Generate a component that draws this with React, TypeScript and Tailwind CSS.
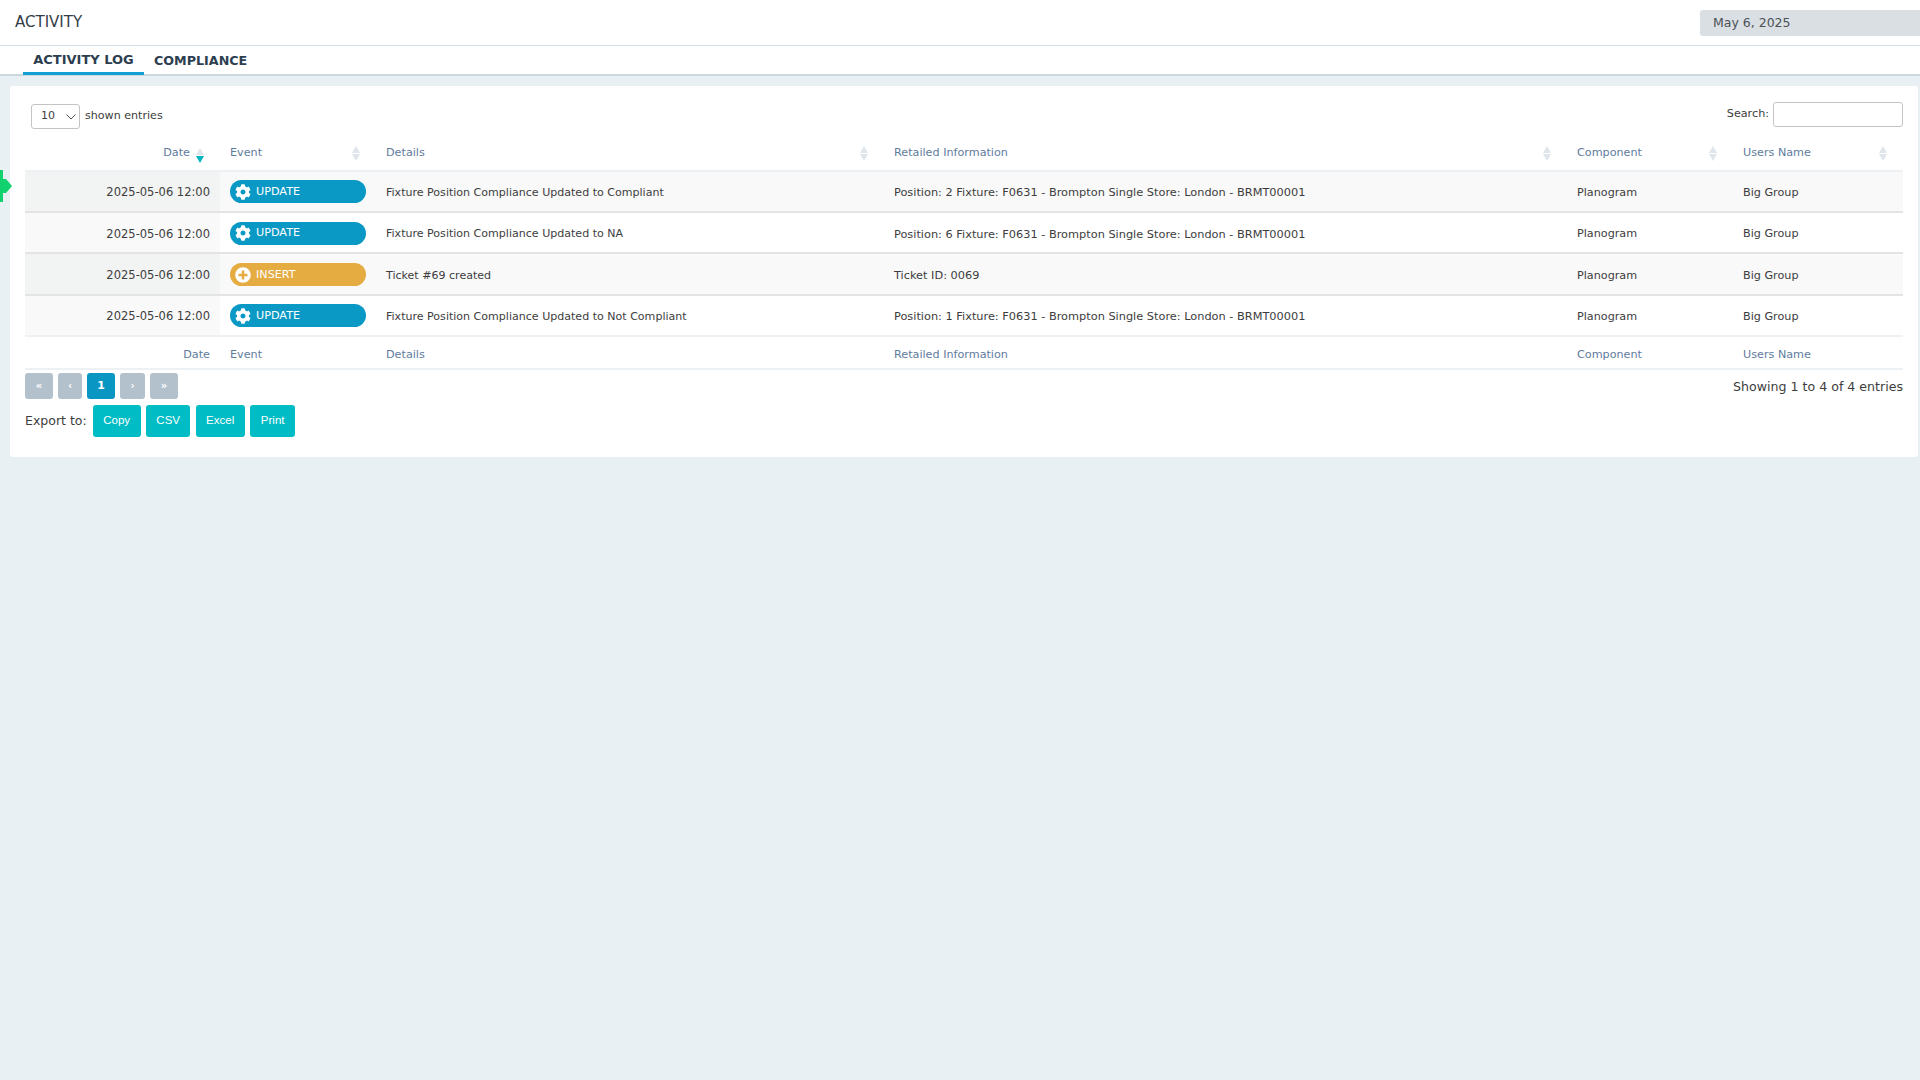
import { FaCog, FaPlusCircle } from "react-icons/fa";

const rows = [
  {
    event: "UPDATE",
    details: "Fixture Position Compliance Updated to Compliant",
    info: "Position: 2 Fixture: F0631 - Brompton Single Store: London - BRMT00001",
  },
  {
    event: "UPDATE",
    details: "Fixture Position Compliance Updated to NA",
    info: "Position: 6 Fixture: F0631 - Brompton Single Store: London - BRMT00001",
  },
  {
    event: "INSERT",
    details: "Ticket #69 created",
    info: "Ticket ID: 0069",
  },
  {
    event: "UPDATE",
    details: "Fixture Position Compliance Updated to Not Compliant",
    info: "Position: 1 Fixture: F0631 - Brompton Single Store: London - BRMT00001",
  },
];

function SortIcon({ active }: { active?: boolean }) {
  return (
    <span className="ml-auto mr-[16px] flex w-[8px] flex-col items-center gap-[1px]">
      <span className="h-0 w-0 border-x-[4px] border-b-[7px] border-x-transparent border-b-[#dfe5ea]" />
      <span
        className={`h-0 w-0 border-x-[4px] border-t-[7px] border-x-transparent ${
          active ? "border-t-[#00b5bd]" : "border-t-[#dfe5ea]"
        }`}
      />
    </span>
  );
}

function EventBadge({ event }: { event: string }) {
  const isInsert = event === "INSERT";
  return (
    <div
      className={`flex h-[23px] w-[136px] items-center rounded-full pl-[5px] text-[11.2px] text-white ${
        isInsert ? "bg-[#e5ac42]" : "bg-[#0a98c4]"
      }`}
    >
      {isInsert ? <FaPlusCircle className="h-[16px] w-[16px]" /> : <FaCog className="h-[16px] w-[16px]" />}
      <span className="ml-[5px] pt-[1px]">{event}</span>
    </div>
  );
}

const headers = ["Event", "Details", "Retailed Information", "Component", "Users Name"];

export default function App() {
  return (
    <div className="relative min-h-[1080px] bg-[#e8f0f3] font-['DejaVu_Sans',sans-serif] text-[11.2px] text-[#3d3d3d]">
      {/* Header */}
      <div className="flex h-[46px] items-center justify-between border-b border-[#d3dde5] bg-white">
        <div className="pl-[15px] text-[15px] text-[#333d47]">ACTIVITY</div>
        <div className="flex h-[26px] w-[220px] items-center rounded-l-[3px] bg-[#dadfe3] pl-[13px] pt-[1px] text-[12.5px] text-[#4b5258]">
          May 6, 2025
        </div>
      </div>

      {/* Tabs */}
      <div className="flex h-[30px] border-b-2 border-[#ccd6de] bg-white pl-[23px] font-bold text-[#2c3e50]">
        <div className="flex h-[29px] w-[121px] items-center justify-center border-b-[3px] border-[#12a0d2] pt-[2px] text-[13px]">
          ACTIVITY LOG
        </div>
        <div className="flex h-[28px] items-center pl-[10px] pt-[2px] text-[12.7px]">COMPLIANCE</div>
      </div>

      {/* Row marker */}
      <svg viewBox="0 0 12 32" className="absolute left-0 top-[170px] h-[32px] w-[12px]">
        <path d="M0 0h3v9l3 0 6 7-6 7-3 0v9H0z" fill="#12d26f" />
      </svg>

      {/* Card */}
      <div className="ml-[10px] mr-[2px] mt-[10px] h-[371px] rounded-[3px] bg-white px-[15px]">
        <div className="flex h-[59px] items-start justify-between">
          <div className="ml-[6px] mt-[18px] flex items-center">
            <div className="flex h-[25px] w-[49px] items-center justify-between rounded-[3px] border-[1.5px] border-[#c4c4c4] pl-[9px] pr-[3px] text-[11px]">
              10
              <svg viewBox="0 0 10 6" className="h-[6px] w-[10px]" fill="none" stroke="#555" strokeWidth="1">
                <path d="M.5.5 5 5 9.500 .5" />
              </svg>
            </div>
            <span className="ml-[5px] text-[11.1px]">shown entries</span>
          </div>
          <div className="mt-[16px] flex items-center">
            <span>Search:</span>
            <div className="ml-[4px] h-[25px] w-[130px] rounded-[3px] border-[1.5px] border-[#c4c4c4]" />
          </div>
        </div>

        <table className="w-[1878px] table-fixed border-collapse">
          <colgroup>
            <col className="w-[195px]" />
            <col className="w-[156px]" />
            <col className="w-[508px]" />
            <col className="w-[683px]" />
            <col className="w-[166px]" />
            <col className="w-[170px]" />
          </colgroup>
          <thead>
            <tr className="h-[25px] border-b-2 border-[#edf1f4] text-[#5f7c9e]">
              <th className="p-0 pb-[8px] font-normal">
                <div className="flex items-center">
                  <span className="ml-auto mr-[6px]">Date</span>
                  <span className="flex translate-y-[2px]">
                    <SortIcon active />
                  </span>
                </div>
              </th>
              {headers.map((h) => (
                <th key={h} className="p-0 pb-[8px] pl-[10px] text-left font-normal">
                  <div className="flex items-center">
                    {h}
                    <SortIcon />
                  </div>
                </th>
              ))}
            </tr>
          </thead>
          <tbody>
            {rows.map((row, i) => (
              <tr
                key={i}
                className={`h-[41.3px] border-b-2 ${
                  i % 2 === 0 ? "bg-[#f9f9f9]" : "bg-white"
                } ${i === 3 ? "border-[#edf1f4]" : "border-[#e4e4e4]"}`}
              >
                <td
                  className={`p-0 pr-[10px] pt-[3px] text-right text-[11.5px] ${
                    i % 2 === 0 ? "bg-[#f2f3f3]" : "bg-[#f9f9f9]"
                  }`}
                >
                  2025-05-06 12:00
                </td>
                <td className="p-0 pl-[10px] pt-[1px]">
                  <EventBadge event={row.event} />
                </td>
                <td className="p-0 pl-[10px] pt-[4px] text-[11.06px]">{row.details}</td>
                <td className="p-0 pl-[10px] pt-[3px] text-[11.33px]">{row.info}</td>
                <td className="p-0 pl-[10px] pt-[4px]">Planogram</td>
                <td className="p-0 pl-[10px] pt-[4px]">Big Group</td>
              </tr>
            ))}
          </tbody>
          <tfoot>
            <tr className="h-[33px] border-b-2 border-[#edf1f4] text-[#5f7c9e]">
              <td className="p-0 pr-[10px] pt-[6px] text-right">Date</td>
              {headers.map((h) => (
                <td key={h} className="p-0 pl-[10px] pt-[6px]">
                  {h}
                </td>
              ))}
            </tr>
          </tfoot>
        </table>

        <div className="mt-[3px] flex items-start justify-between">
          <div className="flex h-[26px] gap-[5px] text-[10px] font-bold text-white">
            <div className="flex w-[28px] items-center justify-center rounded-[3px] bg-[#b3c1cc]">«</div>
            <div className="flex w-[24px] items-center justify-center rounded-[3px] bg-[#b3c1cc]">‹</div>
            <div className="flex w-[28px] items-center justify-center rounded-[3px] bg-[#0a96c2] text-[11px]">1</div>
            <div className="flex w-[25px] items-center justify-center rounded-[3px] bg-[#b3c1cc]">›</div>
            <div className="flex w-[28px] items-center justify-center rounded-[3px] bg-[#b3c1cc]">»</div>
          </div>
          <div className="mt-[5px] text-[12.6px]">Showing 1 to 4 of 4 entries</div>
        </div>

        <div className="mt-[6px] flex items-center">
          <span className="text-[12.5px]">Export to:</span>
          <div className="ml-[6px] flex h-[32px] gap-[5.5px] font-['Liberation_Sans',sans-serif] text-[11.5px] text-white">
            <div className="flex w-[48px] items-center justify-center rounded-[3px] bg-[#00bcc4]">Copy</div>
            <div className="flex w-[44px] items-center justify-center rounded-[3px] bg-[#00bcc4]">CSV</div>
            <div className="flex w-[49px] items-center justify-center rounded-[3px] bg-[#00bcc4]">Excel</div>
            <div className="flex w-[45px] items-center justify-center rounded-[3px] bg-[#00bcc4]">Print</div>
          </div>
        </div>
      </div>
    </div>
  );
}
